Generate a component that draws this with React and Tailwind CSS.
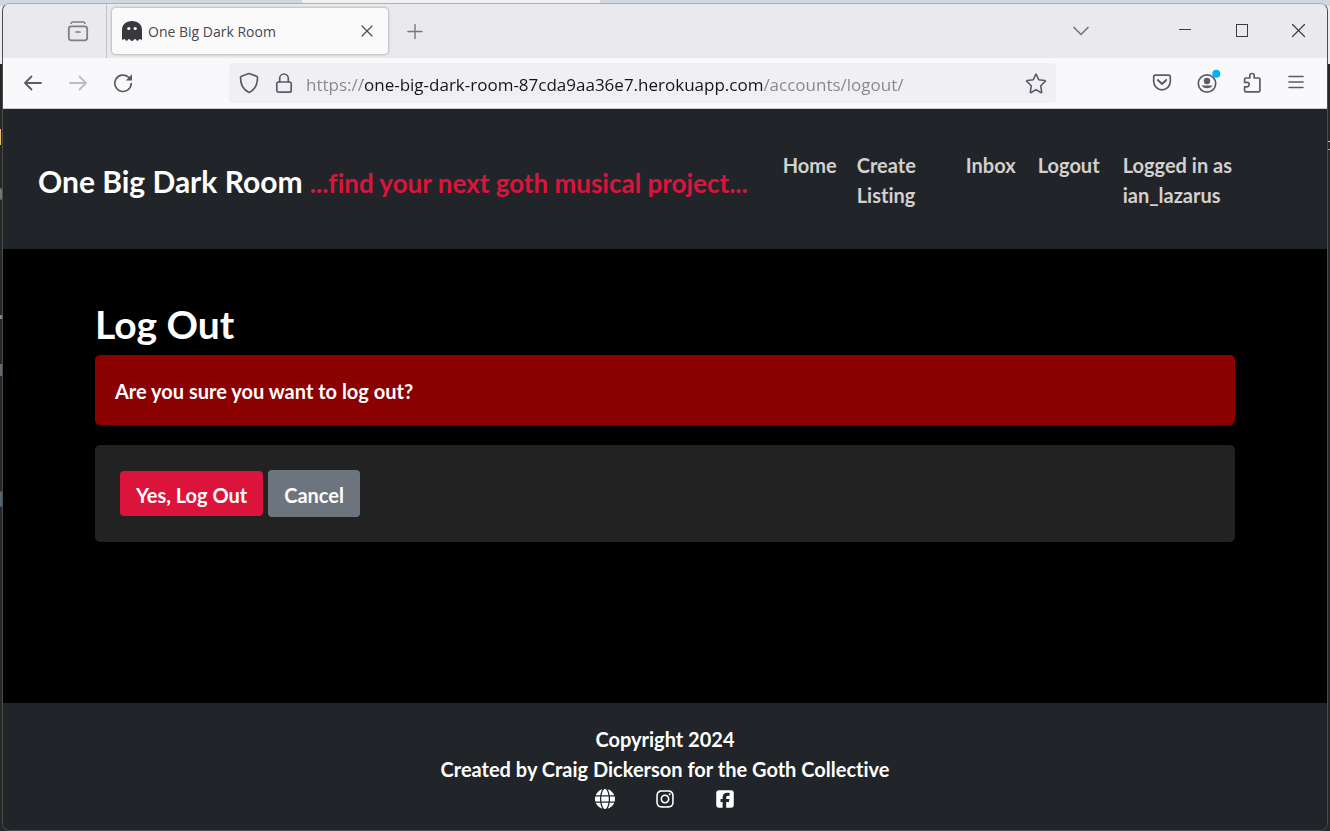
import { FaGlobe, FaInstagram, FaSquareFacebook } from "react-icons/fa6";

const iconProps = {
  fill: "none",
  stroke: "currentColor",
  strokeWidth: 1.5,
  strokeLinecap: "round",
  strokeLinejoin: "round",
  "aria-hidden": true,
};

function Icon({ size = 20, className = "", children }) {
  return (
    <svg width={size} height={size} viewBox={`0 0 ${size} ${size}`} className={className} {...iconProps}>
      {children}
    </svg>
  );
}

function ChromeButton({ label, className = "", children }) {
  return (
    <button type="button" aria-label={label} className={`flex shrink-0 items-center justify-center ${className}`}>
      {children}
    </button>
  );
}

function TabBar() {
  return (
    <div className="flex h-[54px] items-stretch bg-[#eae9ed] text-[#4a4a52]">
      <div className="flex w-[104px] items-center justify-end border-r border-[#c2c1c6] pr-4 text-[#7f7e88]">
        <ChromeButton label="View recent browsing" className="size-6">
          <Icon size={24}>
            <path strokeWidth="1.700" d="M5 4.200C5.300 3.400 6 3 7 3h10c1 0 1.700.4 2 1.200" />
            <rect strokeWidth="1.800" x="2.800" y="7.300" width="18.400" height="14" rx="2.500" />
            <path strokeWidth="1.700" d="M10 13h4" />
          </Icon>
        </ChromeButton>
      </div>
      <div className="my-1 ml-[5px] flex w-[276px] items-center rounded bg-[#fafafb] pl-[10px] pr-3 shadow-[0_0_3px_rgba(0,0,0,0.4)]">
        <svg width="20" height="20" viewBox="0 0 20 20" aria-hidden="true" className="shrink-0">
          <path
            fill="#38383d"
            d="M0 9C0 3.500 4 0 10 0s10 3.500 10 9v9.200c0 .8-.9.900-1.400.3-.5-.6-1.200-.6-1.700.100l-.5.700c-.5.700-1.400.7-1.900 0l-.5-.7c-.5-.7-1.300-.7-1.800 0l-1 1c-.6.600-1.600.6-2.200 0l-1-1c-.6-.7-1.400-.7-1.900 0l-.5.700c-.5.700-1.400.7-1.900 0l-.6-.8c-.4-.6-1-.6-1.500-.1C1 19 0 19 0 18.200z"
          />
          <circle cx="6.800" cy="7.500" r="1.600" fill="#fff" />
          <circle cx="13.200" cy="7.500" r="1.600" fill="#fff" />
        </svg>
        <span className="ml-[6px] flex-1 truncate text-[14px] text-[#48474f]">One Big Dark Room</span>
        <ChromeButton label="Close tab" className="size-[18px] text-[#4a4a52]">
          <Icon size={18}>
            <path strokeWidth="1.200" d="M4 4l10 10M14 4L4 14" />
          </Icon>
        </ChromeButton>
      </div>
      <ChromeButton label="Open a new tab" className="ml-[15px] w-6 text-[#77767f]">
        <Icon size={18}>
          <path strokeWidth="1.400" d="M9 2.500v14M2 9.500h14" />
        </Icon>
      </ChromeButton>
      <div className="ml-auto flex items-center text-[#3c3b42]">
        <ChromeButton label="List all tabs" className="mr-[60px] size-[30px] text-[#77767f]">
          <Icon size={18}>
            <path strokeWidth="1.700" d="M2 5.500l7 7 7-7" />
          </Icon>
        </ChromeButton>
        <ChromeButton label="Minimize" className="h-full w-[57px]">
          <Icon size={14}>
            <path strokeWidth="1" strokeLinecap="butt" d="M1 5.500h12" />
          </Icon>
        </ChromeButton>
        <ChromeButton label="Maximize" className="h-full w-[57px]">
          <Icon size={14}>
            <rect strokeWidth="1" strokeLinejoin="miter" x="1.500" y="0.500" width="11" height="12" />
          </Icon>
        </ChromeButton>
        <ChromeButton label="Close window" className="h-full w-[57px]">
          <Icon size={16}>
            <path strokeWidth="1.200" d="M1.500 1.500l12 12M13.500 1.500l-12 12" />
          </Icon>
        </ChromeButton>
      </div>
    </div>
  );
}

function Toolbar() {
  return (
    <div className="flex h-[51px] items-center border-b border-[#c8cad0] bg-[#f9f9fb] pl-[18px] pr-5 text-[#5b5b66]">
      <div className="flex gap-[21px]">
        <ChromeButton label="Back" className="size-6">
          <Icon>
            <path strokeWidth="1.800" d="M18 10H2M8.500 3.500L2 10l6.500 6.500" />
          </Icon>
        </ChromeButton>
        <ChromeButton label="Forward" className="size-6 text-[#bcbcc2]">
          <Icon>
            <path strokeWidth="1.800" d="M2 10h16M11.500 3.500L18 10l-6.500 6.500" />
          </Icon>
        </ChromeButton>
        <ChromeButton label="Reload" className="size-6">
          <Icon>
            <path strokeWidth="1.700" d="M15.500 4.200A8.200 8.200 0 1 0 18.200 10.500" />
            <path fill="currentColor" stroke="none" d="M19 1.200v6.300h-6.300z" />
          </Icon>
        </ChromeButton>
      </div>
      <div className="ml-[94px] mr-[95px] flex h-10 min-w-0 flex-1 items-center rounded bg-[#f0f0f4] px-[9px]">
        <ChromeButton label="Tracking protection" className="size-[22px]">
          <Icon size={22}>
            <path
              strokeWidth="1.700"
              d="M11 1.500l7.600 2.700c.6.200.9.700.9 1.300 0 6.500-2 12-8.500 15C4.500 17.500 2.500 12 2.500 5.500c0-.6.300-1.100.9-1.300z"
            />
          </Icon>
        </ChromeButton>
        <ChromeButton label="Connection secure" className="ml-[13px] size-[22px]">
          <Icon size={22}>
            <rect strokeWidth="1.700" x="3.800" y="10" width="14.400" height="10.200" rx="1.800" />
            <path strokeWidth="1.700" d="M6.700 10V6.300a4.300 4.300 0 0 1 8.600 0V10" />
          </Icon>
        </ChromeButton>
        {/* The gradient greys the scheme and the path, and leaves the host dark. */}
        <input
          type="text"
          aria-label="Address"
          defaultValue="https://one-big-dark-room-87cda9aa36e7.herokuapp.com/accounts/logout/"
          className="ml-[11px] min-w-0 flex-1 bg-[linear-gradient(to_right,#85858c_57px,#15141a_57px,#15141a_457px,#85858c_457px)] bg-clip-text pt-[3px] text-[17px] text-transparent caret-black outline-none"
        />
        <ChromeButton label="Bookmark this page" className="size-[22px]">
          <Icon size={22}>
            <path
              strokeWidth="1.600"
              d="M11 2l2.700 5.700 6.100.8c.6.100.7.600.3 1l-4.400 4.300 1 6.100c.1.600-.4.900-.9.600L11 17.600l-4.800 2.900c-.5.300-1 0-.9-.6l1-6.100L1.900 9.500c-.4-.4-.3-.9.3-1l6.100-.8z"
            />
          </Icon>
        </ChromeButton>
      </div>
      <div className="flex gap-[22px]">
        <ChromeButton label="Save to Pocket" className="size-[22px]">
          <Icon size={22}>
            <path
              strokeWidth="1.700"
              d="M4.500 4.200h13c1 0 1.800.8 1.800 1.800v4.500a8.300 8.300 0 0 1-16.600 0V6c0-1 .8-1.800 1.800-1.800z"
            />
            <path strokeWidth="1.900" d="M6.800 9l4.200 4 4.200-4" />
          </Icon>
        </ChromeButton>
        <ChromeButton label="Account" className="size-6">
          <svg width="24" height="24" viewBox="0 0 24 24" aria-hidden="true" className="overflow-visible">
            <circle cx="12" cy="12.500" r="8.700" fill="none" stroke="currentColor" strokeWidth="1.700" />
            <circle cx="12" cy="10" r="3.200" fill="currentColor" />
            <path fill="currentColor" d="M6.600 14.600h10.800a5.800 4.300 0 0 1-10.800 0z" />
            <circle cx="21.300" cy="2.800" r="4" fill="#00b3f4" />
          </svg>
        </ChromeButton>
        <ChromeButton label="Extensions" className="size-[22px]">
          <Icon size={22}>
            <path
              strokeWidth="1.700"
              d="M8.800 7V4.700a2.200 2.200 0 0 1 4.400 0V7h4.300c.8 0 1.400.6 1.400 1.400v11c0 .8-.6 1.400-1.400 1.400H5c-.8 0-1.400-.6-1.400-1.400v-3.600h2.300a2.200 2.200 0 0 0 0-4.400H3.600v-3C3.600 7.600 4.200 7 5 7z"
            />
          </Icon>
        </ChromeButton>
        <ChromeButton label="Open application menu" className="size-[22px]">
          <Icon size={22}>
            <path strokeWidth="1.600" d="M4 5.500h14M4 11h14M4 16.500h14" />
          </Icon>
        </ChromeButton>
      </div>
    </div>
  );
}

function SiteHeader() {
  return (
    <header className="flex min-h-[140px] items-center bg-[#212529] pl-[35px] pr-[79px] pt-[2px]">
      <a href="#home" className="shrink-0 whitespace-nowrap pt-1 text-[30px] leading-[45px] text-white">
        One Big Dark Room <span className="text-[26px] text-[#dc143c]">...find your next goth musical project...</span>
      </a>
      <nav className="ml-[35px] flex min-w-0 flex-1 gap-5 text-[#d3d0ce]">
        <a href="#home">Home</a>
        <a href="#create" className="w-[89px]">
          Create Listing
        </a>
        <a href="#inbox" className="w-[52px]">
          Inbox
        </a>
        <a href="#logout" className="w-[65px]">
          Logout
        </a>
        <a href="#profile" className="flex-1">
          Logged in as ian_lazarus
        </a>
      </nav>
    </header>
  );
}

function LogoutPage() {
  return (
    <main className="flex-1 bg-black px-[15px] pt-[51px] text-white">
      <div className="mx-auto max-w-[1140px]">
        <h1 className="mb-[7px] text-[39px] leading-[48px]">Log Out</h1>
        <p className="rounded-[5px] bg-[#8b0000] px-5 pb-[19px] pt-[21px]">Are you sure you want to log out?</p>
        <form
          onSubmit={(event) => event.preventDefault()}
          className="mt-5 flex items-center gap-[5px] rounded-[5px] bg-[#222222] p-[25px]"
        >
          <button type="submit" className="h-[45px] rounded bg-[#dc143c] px-4 pt-[2px]">
            Yes, Log Out
          </button>
          <a href="#home" className="flex h-[47px] items-center rounded bg-[#6c757d] px-4 pt-[2px]">
            Cancel
          </a>
        </form>
      </div>
    </main>
  );
}

function SiteFooter() {
  return (
    <footer className="bg-[#212529] pb-4 pt-[21px] text-center text-white">
      <p>Copyright 2024</p>
      <p>Created by Craig Dickerson for the Goth Collective</p>
      <div className="flex h-[30px] items-center justify-center gap-10">
        <a href="#website" aria-label="Website">
          <FaGlobe />
        </a>
        <a href="#instagram" aria-label="Instagram">
          <FaInstagram />
        </a>
        <a href="#facebook" aria-label="Facebook">
          <FaSquareFacebook />
        </a>
      </div>
    </footer>
  );
}

function DesktopEdge() {
  return (
    <div aria-hidden="true">
      <div className="absolute left-[302px] top-0 h-[3px] w-[298px] bg-[#f1f1f1]" />
      <div className="absolute left-0 top-[129px] h-4 w-px bg-[#e8bf6f]" />
      <div className="absolute left-0 top-[188px] h-3 w-[2px] rounded-r bg-[#77726a]" />
      <div className="absolute left-0 top-[315px] h-1 w-[2px] bg-[#858585]" />
      <div className="absolute left-0 top-[364px] h-3 w-[2px] bg-[#66637f]" />
      <div className="absolute left-0 top-[491px] h-4 w-[2px] rounded-r bg-[#466a7c]" />
      <div className="absolute right-0 top-[141px] h-px w-[2px] bg-[#c8c8c8]" />
      <div className="absolute right-0 top-[149px] h-px w-[2px] bg-[#a8a8a8]" />
    </div>
  );
}

export default function App() {
  return (
    <div className="relative flex min-h-screen flex-col bg-[linear-gradient(to_bottom,#d0d7e0_6px,#ececec_6px,#ececec_64px,#262626_64px)] px-[2px] pt-[3px]">
      <DesktopEdge />
      <div className="flex flex-1 flex-col overflow-hidden rounded-[8px] border border-[#4c4c4c] border-t-[#aeb0b6]">
        <div className="font-['Open_Sans','Noto_Sans',sans-serif]">
          <TabBar />
          <Toolbar />
        </div>
        <div className="flex flex-1 flex-col font-['Lato',sans-serif] text-[20px] font-bold leading-[30px] [font-variant-ligatures:none]">
          <SiteHeader />
          <LogoutPage />
          <SiteFooter />
        </div>
      </div>
    </div>
  );
}
